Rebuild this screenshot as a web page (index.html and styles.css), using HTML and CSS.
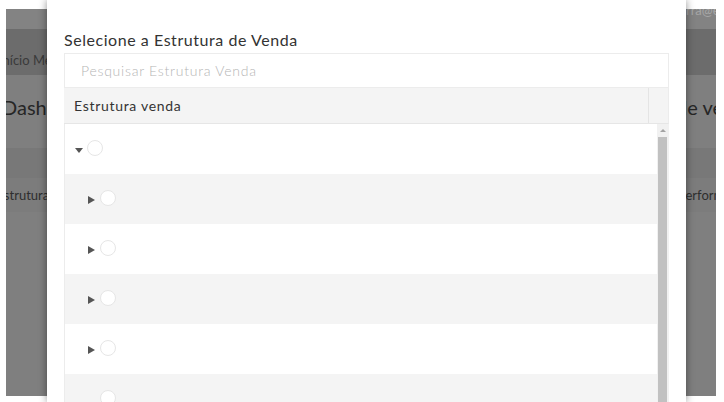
FILE: index.html
```html
<!DOCTYPE html>
<html lang="pt-BR">
<head>
<meta charset="utf-8">
<title>Selecione a Estrutura de Venda</title>
<link rel="stylesheet" href="styles.css">
</head>
<body>
  <div class="page">
    <div class="band topbar">
      <div class="side left"></div>
      <div class="mid"></div>
      <div class="side right"><span class="user">rra@empresa.com.br</span></div>
    </div>
    <div class="band nav">
      <div class="side left"><span class="nav-text">Início Menu</span></div>
      <div class="mid"></div>
      <div class="side right"></div>
    </div>
    <div class="band heading">
      <div class="side left"><span class="h-left">Dashboard</span></div>
      <div class="mid"></div>
      <div class="side right"><span class="h-right">de vendas</span></div>
    </div>
    <div class="band thead"></div>
    <div class="band trow">
      <div class="side left"><span class="c-left">estrutura</span></div>
      <div class="mid"></div>
      <div class="side right"><span class="c-right">Performance</span></div>
    </div>
    <div class="rest"></div>
  </div>

  <div class="modal">
    <h4 class="modal-title">Selecione a Estrutura de Venda</h4>
    <input class="search" type="text" placeholder="Pesquisar Estrutura Venda">
    <div class="grid">
      <div class="grid-head">
        <div class="col-main">Estrutura venda</div>
        <div class="col-pad"></div>
      </div>
      <div class="grid-body">
        <div class="rows">
          <div class="row lvl0"><span class="caret down"></span><span class="radio"></span></div>
          <div class="row lvl1 alt"><span class="caret right"></span><span class="radio"></span></div>
          <div class="row lvl1"><span class="caret right"></span><span class="radio"></span></div>
          <div class="row lvl1 alt"><span class="caret right"></span><span class="radio"></span></div>
          <div class="row lvl1"><span class="caret right"></span><span class="radio"></span></div>
          <div class="row lvl1 alt"><span class="caret none"></span><span class="radio"></span></div>
        </div>
        <div class="vscroll"><div class="arrow-box"><span class="arrow"></span></div><div class="thumb"></div></div>
      </div>
    </div>
  </div>
</body>
</html>
```
FILE: styles.css
```css
html, body {
  margin: 0;
  padding: 0;
  background: #ffffff;
  font-family: "Lato", "Noto Sans", sans-serif;
}
body {
  position: relative;
  width: 724px;
  height: 402px;
  overflow: hidden;
}
.page {
  margin: 9px 8px 0 6px;
  height: 387px;
  overflow: hidden;
  background: #7f7f7f;
  display: flex;
  flex-direction: column;
}
.band {
  display: flex;
  white-space: nowrap;
}
.side {
  overflow: hidden;
  display: flex;
  align-items: center;
}
.side.left { width: 41px; }
.side.right { width: 30px; }
.mid { flex: 1; }

.topbar {
  height: 20px;
  background: #838383;
}
.topbar .side { align-items: flex-start; }
.user {
  display: block;
  font-size: 13px;
  line-height: 13px;
  margin-top: -5px;
  color: #a6a6a6;
}
.nav {
  height: 46px;
  background: #6c6c6c;
}
.nav-text {
  font-size: 13px;
  color: #3a3a3a;
  margin-left: -7px;
  margin-top: 16px;
}
.heading {
  height: 73px;
  font-size: 20px;
  color: #262626;
}
.h-left { margin-left: -4px; margin-top: -10px; }
.h-right { margin-left: -10px; margin-top: -10px; }
.thead {
  height: 30px;
  background: #787878;
}
.trow {
  height: 34px;
  font-size: 13px;
  color: #2e2e2e;
  background: #7c7c7c;
}
.c-left { margin-left: -9px; }
.c-right { margin-left: -8px; }
.rest { flex: 1; }

.modal {
  position: absolute;
  left: 47px;
  top: 0;
  width: 639px;
  height: 402px;
  box-sizing: border-box;
  padding: 0 17px;
  background: #ffffff;
  box-shadow: 0 0 8px rgba(0, 0, 0, 0.45);
  display: flex;
  flex-direction: column;
}
.modal-title {
  margin: 0;
  padding-top: 30px;
  height: 23px;
  font-size: 16px;
  line-height: 20px;
  font-weight: 400;
  letter-spacing: 0.55px;
  color: #333333;
}
.search {
  display: block;
  box-sizing: border-box;
  width: 100%;
  height: 35px;
  margin: 0;
  border: 1px solid #ececec;
  padding: 0 16px;
  font-family: inherit;
  font-size: 14px;
  font-weight: 300;
  letter-spacing: 0.75px;
  color: #333;
  outline: none;
  background: #fff;
}
.search::placeholder { color: #b5b5b5; }
.grid {
  flex: 1;
  display: flex;
  flex-direction: column;
  min-height: 0;
}
.grid-head {
  display: flex;
  height: 35px;
  background: #f4f4f4;
  border-bottom: 1px solid #e6e6e6;
  border-right: 1px solid #ececec;
}
.col-main {
  flex: 1;
  padding-left: 10px;
  display: flex;
  align-items: center;
  font-size: 14px;
  letter-spacing: 0.7px;
  color: #333333;
}
.col-pad {
  width: 19px;
  border-left: 1px solid #e4e4e4;
}
.grid-body {
  flex: 1;
  display: flex;
  min-height: 0;
  overflow: hidden;
  border-left: 1px solid #ececec;
}
.rows { flex: 1; }
.row {
  height: 50px;
  display: flex;
  align-items: center;
  background: #ffffff;
}
.row.alt { background: #f4f4f4; }
.row.lvl0 { padding-left: 10px; }
.row.lvl1 { padding-left: 23px; }
.caret {
  width: 12px;
  height: 8px;
  display: flex;
  align-items: center;
  margin-top: 2px;
}
.caret.down::before {
  content: "";
  border-left: 4px solid transparent;
  border-right: 4px solid transparent;
  border-top: 5px solid #555555;
}
.caret.right::before {
  content: "";
  border-top: 4px solid transparent;
  border-bottom: 4px solid transparent;
  border-left: 7px solid #555555;
}
.radio {
  width: 16px;
  height: 16px;
  box-sizing: border-box;
  border: 1px solid #e6e6e6;
  border-radius: 50%;
  background: #ffffff;
  margin-top: -3px;
}
.vscroll {
  width: 12px;
  background: #f1f1f1;
  display: flex;
  flex-direction: column;
}
.arrow-box {
  height: 13px;
  display: flex;
  justify-content: center;
  align-items: center;
}
.arrow {
  border-left: 3px solid transparent;
  border-right: 3px solid transparent;
  border-bottom: 3px solid #a3a3a3;
}
.thumb {
  flex: 1;
  margin: 0 2px 0 1px;
  background: #c1c1c1;
}
```
